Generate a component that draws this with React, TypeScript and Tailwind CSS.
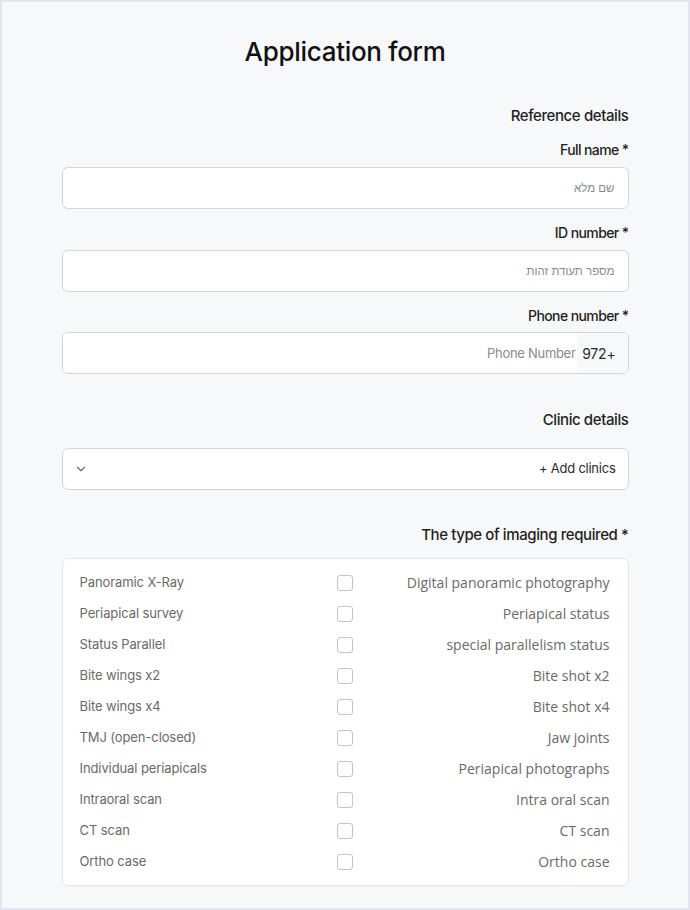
import React from "react";
import { ChevronDown } from "lucide-react";

const imagingTypes: [string, string][] = [
  ["Panoramic X-Ray", "Digital panoramic photography"],
  ["Periapical survey", "Periapical status"],
  ["Status Parallel", "special parallelism status"],
  ["Bite wings x2", "Bite shot x2"],
  ["Bite wings x4", "Bite shot x4"],
  ["TMJ (open-closed)", "Jaw joints"],
  ["Individual periapicals", "Periapical photographs"],
  ["Intraoral scan", "Intra oral scan"],
  ["CT scan", "CT scan"],
  ["Ortho case", "Ortho case"],
];

const baseFont = { fontFamily: 'Inter, "Liberation Sans", sans-serif' };
const hebrewFont = { fontFamily: '"Liberation Sans", Arial, sans-serif' };

function FieldLabel({ children }: { children: React.ReactNode }) {
  return (
    <div className="text-right text-[14px] leading-[20px] font-medium tracking-[-0.6px] text-[#1f1f1f]">
      {children}
    </div>
  );
}

function SectionTitle({ children }: { children: React.ReactNode }) {
  return (
    <div className="text-right text-[15px] leading-[24px] font-medium tracking-[-0.4px] text-[#1f1f1f]">
      {children}
    </div>
  );
}

function TextInput({ placeholder }: { placeholder: string }) {
  return (
    <input
      dir="rtl"
      placeholder={placeholder}
      className="mt-[7px] h-[42px] w-full rounded-[6px] border border-[#d2d4d8] bg-white px-[13px] text-right text-[11.5px] text-[#333] placeholder:text-[#8a8a8a] outline-none"
      style={hebrewFont}
    />
  );
}

export default function App() {
  return (
    <div
      className="box-border h-[910px] w-full border-2 border-[#e3e4f0] bg-[#f7f8fa]"
      style={baseFont}
    >
      <div className="mx-auto w-[567px] pt-[33px]">
        <h1 className="text-center text-[26px] leading-[34px] font-medium tracking-[-0.3px] text-[#111]">
          Application form
        </h1>

        <div className="mt-[35px]">
          <SectionTitle>Reference details</SectionTitle>
        </div>

        <div className="mt-[12px]">
          <FieldLabel>Full name *</FieldLabel>
          <TextInput placeholder="שם מלא" />
        </div>

        <div className="mt-[14px]">
          <FieldLabel>ID number *</FieldLabel>
          <TextInput placeholder="מספר תעודת זהות" />
        </div>

        <div className="mt-[14px]">
          <FieldLabel>Phone number *</FieldLabel>
          <div className="mt-[6px] flex h-[42px] w-full overflow-hidden rounded-[6px] border border-[#d2d4d8] bg-white">
            <input
              placeholder="Phone Number"
              className="h-full flex-1 bg-white pr-[1px] text-right text-[13px] tracking-[-0.3px] text-[#333] placeholder:text-[#8a8a8a] outline-none"
            />
            <div className="flex h-full w-[51px] items-center justify-end bg-[#f7f8fa] pr-[12px] text-[14px] tracking-[-0.2px] text-[#2a2a2a]">
              972+
            </div>
          </div>
        </div>

        <div className="mt-[34px]">
          <SectionTitle>Clinic details</SectionTitle>
        </div>

        <div className="mt-[16px] flex h-[42px] w-full items-center justify-between rounded-[6px] border border-[#d2d4d8] bg-white pl-[11px] pr-[12px]">
          <ChevronDown size={14} strokeWidth={2} className="text-[#6b6b6b]" />
          <span className="text-[13px] tracking-[-0.25px] text-[#2a2a2a]">+ Add clinics</span>
        </div>

        <div className="mt-[33px]">
          <SectionTitle>The type of imaging required *</SectionTitle>
        </div>

        <div className="mt-[11px] rounded-[6px] border border-[#e3e5e8] bg-white pl-[17px] pr-[18px] py-[8px]">
          {imagingTypes.map(([en, alt]) => (
            <div
              key={en}
              className="grid h-[31px] grid-cols-[1fr_auto_1fr] items-center"
            >
              <span className="text-[13px] tracking-[-0.1px] text-[#6a6a6a]">{en}</span>
              <span className="block h-[16px] w-[16px] rounded-[3px] border-[1.5px] border-[#c4c4c4] bg-white" />
              <span
                className="text-right text-[14px] text-[#6a6a6a]"
                style={{ fontFamily: '"Open Sans", "Noto Sans", sans-serif' }}
              >
                {alt}
              </span>
            </div>
          ))}
        </div>
      </div>
    </div>
  );
}
